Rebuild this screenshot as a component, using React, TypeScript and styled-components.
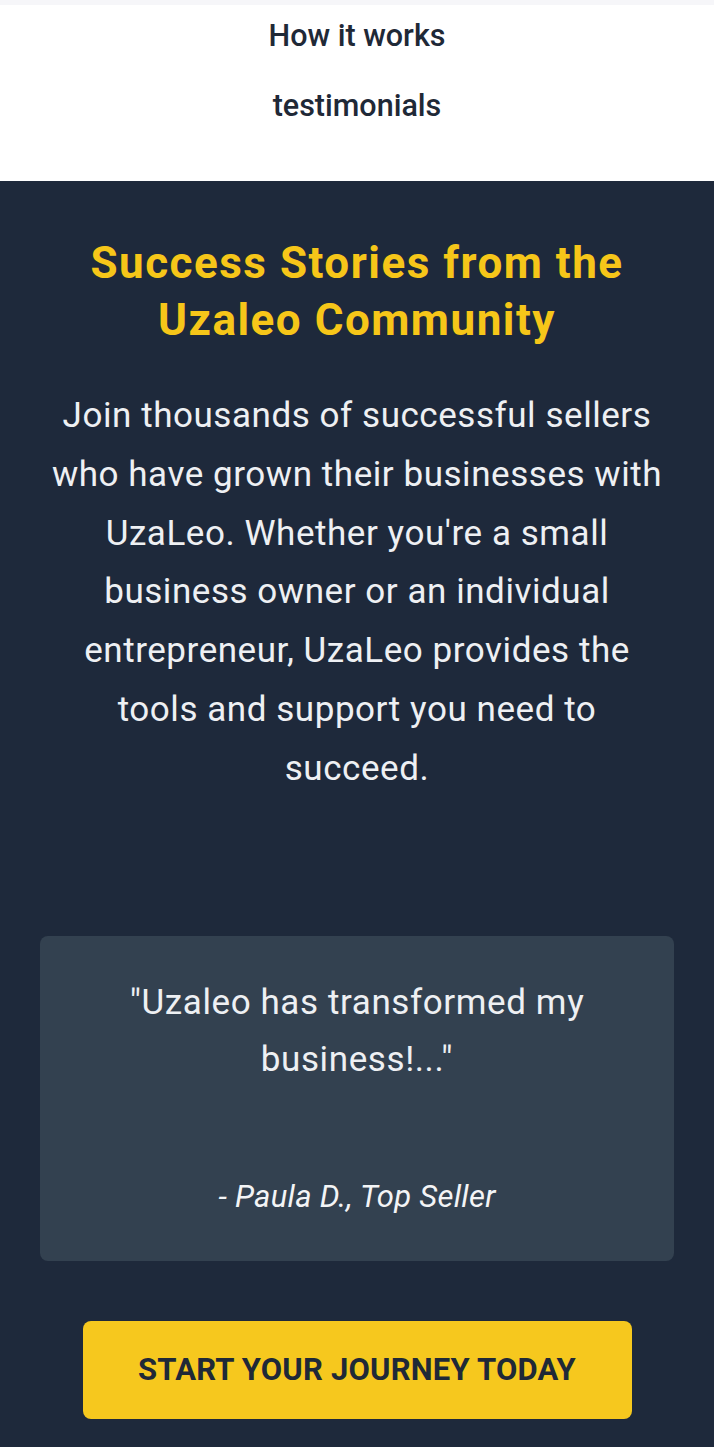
import React from "react";
import styled, { createGlobalStyle } from "styled-components";

const Global = createGlobalStyle`
  html, body { margin: 0; padding: 0; background: #1e293b; }
  body { font-family: Roboto, "Noto Sans", sans-serif; -webkit-font-smoothing: antialiased; }
  * { box-sizing: border-box; }
`;

const TopStrip = styled.div`
  height: 5px;
  background: #f6f6f9;
`;

const Nav = styled.nav`
  background: #ffffff;
  display: flex;
  flex-direction: column;
  align-items: center;
  gap: 34px;
  padding: 13px 0 57px;
`;

const NavLink = styled.a`
  font-size: 30.5px;
  line-height: 36px;
  font-weight: 500;
  color: #1f2937;
  text-decoration: none;
`;

const Section = styled.section`
  background: #1e293b;
  padding: 54px 40px 27px;
  display: flex;
  flex-direction: column;
  align-items: center;
  text-align: center;
`;

const Heading = styled.h2`
  margin: 0;
  font-size: 44px;
  line-height: 57px;
  font-weight: 700;
  letter-spacing: 1.5px;
  color: #f6c619;
  max-width: 580px;
`;

const Lead = styled.p`
  margin: 38px 0 0;
  max-width: 626px;
  font-size: 35px;
  line-height: 58.8px;
  letter-spacing: 0.55px;
  color: #eef0f3;
  font-weight: 400;
`;

const Card = styled.blockquote`
  margin: 137px 0 0;
  width: 100%;
  background: #334150;
  border-radius: 8px;
  padding: 38px 60px 44px;
  display: flex;
  flex-direction: column;
  align-items: center;
  gap: 89px;
`;

const Quote = styled.p`
  margin: 0;
  font-size: 35px;
  line-height: 57px;
  letter-spacing: 0.6px;
  color: #eef0f3;
`;

const Author = styled.cite`
  font-size: 31px;
  line-height: 40px;
  font-style: italic;
  letter-spacing: 0.3px;
  color: #f3f4f6;
`;

const Cta = styled.button`
  margin-top: 60px;
  width: 549px;
  height: 98px;
  border: none;
  border-radius: 8px;
  background: #f6c81e;
  color: #1f2937;
  font-family: Roboto, "Noto Sans", sans-serif;
  font-size: 31px;
  font-weight: 700;
  letter-spacing: 0.2px;
`;

export default function App() {
  return (
    <>
      <Global />
      <TopStrip />
      <Nav>
        <NavLink href="#">How it works</NavLink>
        <NavLink href="#">testimonials</NavLink>
      </Nav>
      <Section>
        <Heading>Success Stories from the Uzaleo Community</Heading>
        <Lead>
          Join thousands of successful sellers who have grown their businesses with UzaLeo.
          Whether you're a small business owner or an individual entrepreneur, UzaLeo
          provides the tools and support you need to succeed.
        </Lead>
        <Card>
          <Quote>"Uzaleo has transformed my business!..."</Quote>
          <Author>- Paula D., Top Seller</Author>
        </Card>
        <Cta>START YOUR JOURNEY TODAY</Cta>
      </Section>
    </>
  );
}
